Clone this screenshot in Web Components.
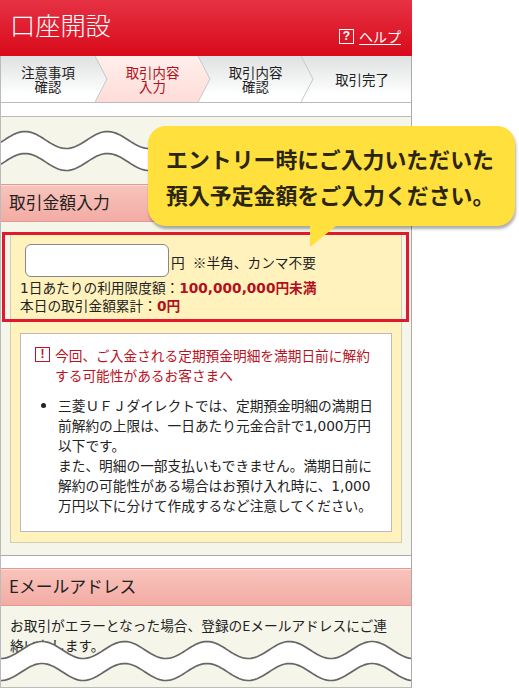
<!DOCTYPE html>
<html lang="ja">
<head>
<meta charset="utf-8">
<title>口座開設</title>
<style>
  html, body { margin: 0; padding: 0; background: #fff; }
  body { font-family: "Noto Sans CJK JP", "Noto Sans", sans-serif; color: #222; overflow: hidden; height: 688px; }
</style>
</head>
<body>
<bank-app>
  <bank-header slot="top" title="口座開設"></bank-header>
  <step-nav slot="top">
    <step-item>注意事項<br>確認</step-item>
    <step-item active>取引内容<br>入力</step-item>
    <step-item>取引内容<br>確認</step-item>
    <step-item last>取引完了</step-item>
  </step-nav>
  <form-section heading="取引金額入力" filler="67">
    <amount-form></amount-form>
  </form-section>
  <form-section heading="Eメールアドレス" tail>
    <p style="margin:0;padding:9px 16px 0 9px;font-size:13.7px;line-height:20px">お取引がエラーとなった場合、登録のEメールアドレスにご連絡いたします。</p>
  </form-section>
  <wave-cut slot="over" top="130" phase="25"></wave-cut>
  <wave-cut slot="over" top="640" phase="42"></wave-cut>
  <highlight-frame slot="over"></highlight-frame>
  <call-out slot="over">エントリー時にご入力いただいた<br>預入予定金額をご入力ください。</call-out>
</bank-app>

<script>
/** Page frame: fixed width column, overlays sit on top of it */
class BankApp extends HTMLElement {
  constructor() {
    super();
    this.attachShadow({mode: 'open'});
    this.shadowRoot.innerHTML = `
      <style>
        :host { display: block; position: relative; width: 412px; height: 688px; overflow: visible; }
        .col { display: flex; flex-direction: column; height: 688px; box-sizing: border-box; overflow: hidden; }
        .gap { display: flex; flex-direction: column; gap: 12px; padding-top: 13px; flex: 1; min-height: 0;
               border-left: 1px solid #bbb; border-right: 1px solid #aaa; margin: 0; box-sizing: border-box; background: #fff; }
      </style>
      <div class="col">
        <slot name="top"></slot>
        <div class="gap"><slot></slot></div>
      </div>
      <slot name="over"></slot>`;
  }
}

class BankHeader extends HTMLElement {
  constructor() {
    super();
    this.attachShadow({mode: 'open'});
    this.shadowRoot.innerHTML = `
      <style>
        :host { display: flex; height: 56px; box-sizing: border-box; padding: 0 11px 0 10px; color: #fff;
                background: linear-gradient(#e63244, #d80a1a); justify-content: space-between; }
        h1 { margin: 0; font-size: 25.2px; font-weight: 300; line-height: 48px; }
        .help { display: flex; align-items: center; gap: 5px; align-self: flex-end; margin-bottom: 12px; font-size: 14px; line-height: 16px; }
        .q { width: 13px; height: 13px; border: 1px solid #fff; display: flex; align-items: center; justify-content: center;
             font: bold 12px/13px "Liberation Sans", sans-serif; }
        a { color: #fff; text-decoration: underline; text-underline-offset: 2px; }
      </style>
      <h1>${this.getAttribute('title')}</h1>
      <div class="help"><span class="q">?</span><a>ヘルプ</a></div>`;
  }
}

class StepNav extends HTMLElement {
  constructor() {
    super();
    this.attachShadow({mode: 'open'});
    this.shadowRoot.innerHTML = `
      <style>
        :host { display: grid; grid-template-columns: 94px 103px 103px 1fr; height: 47px; box-sizing: border-box;
                border-bottom: 1px solid #bbb; border-left: 1px solid #bbb; border-right: 1px solid #aaa; }
      </style>
      <slot></slot>`;
  }
}

let stepGradient = 0;
class StepItem extends HTMLElement {
  constructor() {
    super();
    this.attachShadow({mode: 'open'});
    const active = this.hasAttribute('active');
    const last = this.hasAttribute('last');
    const first = !this.previousElementSibling;
    const id = 'g' + (stepGradient++);
    const c1 = active ? '#ffefeb' : '#dfe2e2';
    const c2 = active ? '#ffdcd8' : '#fff';
    const stop = active ? '100%' : '85%';
    this.shadowRoot.innerHTML = `
      <style>
        :host { display: flex; position: relative; align-items: center; justify-content: center; text-align: center;
                height: 46px; box-sizing: border-box; padding-left: ${first ? 0 : 12}px;
                font-size: 13.4px; line-height: 14px; z-index: ${10 - stepGradient};
                color: ${active ? '#b01020' : '#222'};
                background: linear-gradient(${c1} 0, ${c2} ${stop}); }
        svg { position: absolute; left: 100%; top: 0; display: block; }
      </style>
      <span><slot></slot></span>
      ${last ? '' : `<svg width="13" height="46" viewBox="0 0 13 46">
        <defs><linearGradient id="${id}" x1="0" y1="0" x2="0" y2="1">
          <stop offset="0" stop-color="${c1}"/><stop offset="${active ? 1 : .85}" stop-color="${c2}"/>
        </linearGradient></defs>
        <path d="M0 0 L12 23 L0 46 Z" fill="url(#${id})"/>
        <path d="M0 0 L12 23 L0 46" fill="none" stroke="#c4c8c8" stroke-width="1"/>
      </svg>`}`;
  }
}

class FormSection extends HTMLElement {
  constructor() {
    super();
    this.attachShadow({mode: 'open'});
    const tail = this.hasAttribute('tail');
    this.shadowRoot.innerHTML = `
      <style>
        :host { display: block; background: #f5f5e9; border-top: 1px solid #bbb; border-bottom: 1px solid ${tail ? '#bbb' : '#aaa'};
                ${tail ? 'flex: 1; border-top: 0;' : ''}
                padding-top: ${this.getAttribute('filler') || 0}px; }
        h2 { margin: 0; height: 38px; box-sizing: border-box; padding-left: 8px; font-size: 16.8px; font-weight: 400;
             line-height: 35px; color: #222; border: solid #e39a95; border-width: 1px 0;
             background: linear-gradient(#f8c4bc, #f3aca4); box-shadow: inset 0 1px 0 #fbdcd6; }
      </style>
      <h2>${this.getAttribute('heading')}</h2>
      <slot></slot>`;
  }
}

class AmountForm extends HTMLElement {
  constructor() {
    super();
    this.attachShadow({mode: 'open'});
    this.shadowRoot.innerHTML = `
      <style>
        :host { display: block; margin: 10px 9px 12px 9px; box-sizing: border-box; height: 311px; padding: 11px 9px 0;
                background: #fff2bd; border: 1px solid #cfcdb4; font-size: 13.7px; color: #222; }
        .row { display: flex; align-items: flex-end; padding-left: 5px; line-height: 20px; }
        input { width: 144px; height: 33px; box-sizing: border-box; margin: 0 2px 0 0; border: 1px solid #888; border-radius: 6px; background: #fff; }
        .row span { padding-bottom: 5px; }
        .row .note { margin-left: 8px; }
        .lines { line-height: 18px; margin-top: 1px; }
        b { color: #b30f1c; font-weight: 700; }
        .n { font-family: "DejaVu Sans", sans-serif; line-height: 0; }
        notice-box { margin-top: 19px; }
      </style>
      <div class="row"><input type="text"><span>円</span><span class="note">※半角、カンマ不要</span></div>
      <div class="lines"><span class="n">1</span>日あたりの利用限度額：<b><span class="n">100,000,000</span>円未満</b><br>本日の取引金額累計：<b><span class="n">0</span>円</b></div>
      <notice-box>
        <span slot="title">今回、ご入金される定期預金明細を満期日前に解約する可能性があるお客さまへ</span>
        三菱ＵＦＪダイレクトでは、定期預金明細の満期日前解約の上限は、一日あたり元金合計で<span class="n">1,000</span>万円以下です。<br>また、明細の一部支払いもできません。満期日前に解約の可能性がある場合はお預け入れ時に、<span class="n">1,000</span>万円以下に分けて作成するなど注意してください。
      </notice-box>`;
  }
}

class NoticeBox extends HTMLElement {
  constructor() {
    super();
    this.attachShadow({mode: 'open'});
    this.shadowRoot.innerHTML = `
      <style>
        :host { display: block; height: 199px; box-sizing: border-box; background: #fff; border: 1px solid #bbb;
                padding: 11px 17px 0 14px; font-size: 13.7px; line-height: 20px; color: #222; }
        .title { display: flex; gap: 5px; color: #b8141f; }
        .mark { flex: none; width: 13px; height: 13px; margin-top: 2px; border: 1px solid #c8101f; display: flex; align-items: center;
                justify-content: center; font: bold 12px/13px "Liberation Sans", sans-serif; color: #c8101f; }
        .item { display: flex; margin-top: 10px; }
        .dot { flex: none; width: 5px; height: 5px; border-radius: 50%; background: #222; margin: 8px 12px 0 6px; }
      </style>
      <div class="title"><span class="mark">!</span><div><slot name="title"></slot></div></div>
      <div class="item"><span class="dot"></span><div><slot></slot></div></div>`;
  }
}

/** Torn-page mark: white band between two sine lines */
class WaveCut extends HTMLElement {
  constructor() {
    super();
    this.attachShadow({mode: 'open'});
    const phase = +this.getAttribute('phase');
    const period = 82.5, amp = 8.5, w = 410;
    const pts = (offset) => {
      const out = [];
      for (let x = 0; x <= w; x += 2) {
        out.push(x + ' ' + (offset - amp * Math.cos((x + 1 - phase) * 2 * Math.PI / period)).toFixed(2));
      }
      return out;
    };
    const up = pts(10), low = pts(32);
    this.shadowRoot.innerHTML = `
      <style>
        :host { position: absolute; left: 1px; top: ${this.getAttribute('top')}px; width: ${w}px; height: 44px; display: block; }
        svg { display: block; }
      </style>
      <svg width="${w}" height="44" viewBox="0 0 ${w} 44">
        <path fill="#fff" d="M${up.join(' L')} L${low.slice().reverse().join(' L')} Z"/>
        <path fill="none" stroke="#666" stroke-width="1.7" d="M${up.join(' L')}"/>
        <path fill="none" stroke="#666" stroke-width="1.7" d="M${low.join(' L')}"/>
      </svg>`;
  }
}

class HighlightFrame extends HTMLElement {
  constructor() {
    super();
    this.attachShadow({mode: 'open'});
    this.shadowRoot.innerHTML = `
      <style>
        :host { position: absolute; left: 2px; top: 232px; width: 407px; height: 90px; box-sizing: border-box;
                border: 3px solid #e01a2e; display: block; }
      </style>`;
  }
}

class CallOut extends HTMLElement {
  constructor() {
    super();
    this.attachShadow({mode: 'open'});
    this.shadowRoot.innerHTML = `
      <style>
        :host { position: absolute; left: 148px; top: 126px; width: 367px; height: 100px; box-sizing: border-box; display: block;
                padding: 15px 0 0 18px; background: #ffe03c; border-radius: 18px; box-shadow: 1px 3px 3px rgba(0,0,0,.32);
                font-size: 21.9px; line-height: 36px; font-weight: 700; color: #2b2515; white-space: nowrap; }
        svg { position: absolute; left: 162px; top: 100px; display: block; }
      </style>
      <slot></slot>
      <svg width="26" height="22" viewBox="0 0 26 22"><path d="M0 0 H26 L0 21 Z" fill="#ffe03c"/></svg>`;
  }
}

customElements.define('bank-app', BankApp);
customElements.define('bank-header', BankHeader);
customElements.define('step-nav', StepNav);
customElements.define('step-item', StepItem);
customElements.define('form-section', FormSection);
customElements.define('notice-box', NoticeBox);
customElements.define('amount-form', AmountForm);
customElements.define('wave-cut', WaveCut);
customElements.define('highlight-frame', HighlightFrame);
customElements.define('call-out', CallOut);
</script>
</body>
</html>
